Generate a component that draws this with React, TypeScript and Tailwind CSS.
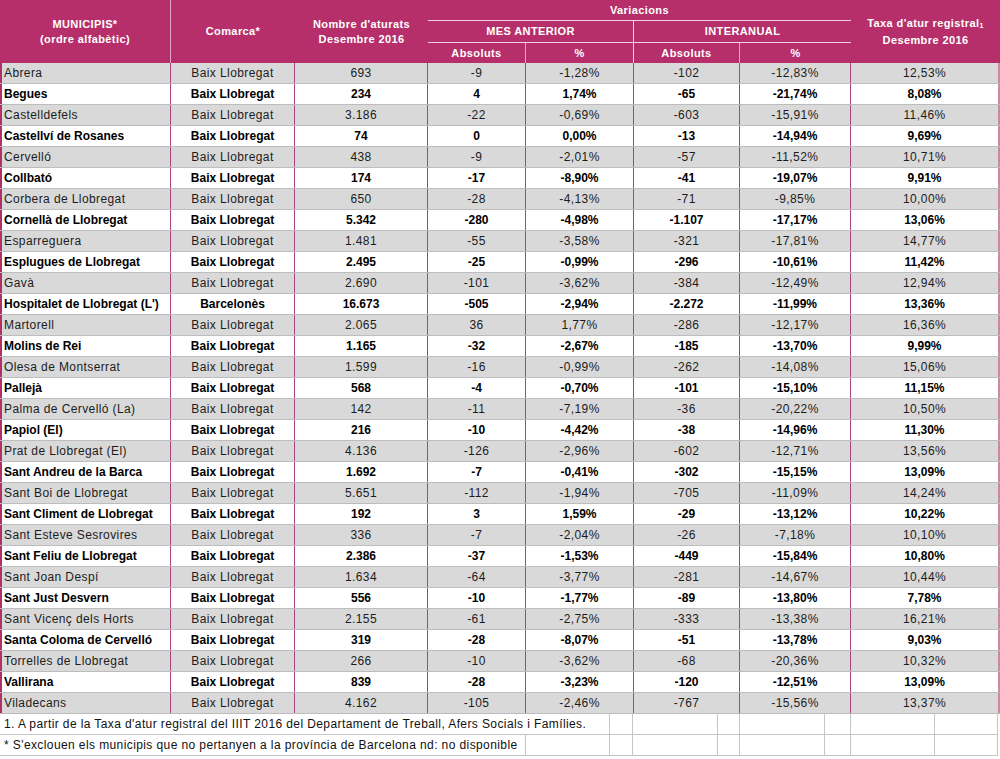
import React from "react";

const rows: string[][] = [
  ["Abrera", "Baix Llobregat", "693", "-9", "-1,28%", "-102", "-12,83%", "12,53%"],
  ["Begues", "Baix Llobregat", "234", "4", "1,74%", "-65", "-21,74%", "8,08%"],
  ["Castelldefels", "Baix Llobregat", "3.186", "-22", "-0,69%", "-603", "-15,91%", "11,46%"],
  ["Castellví de Rosanes", "Baix Llobregat", "74", "0", "0,00%", "-13", "-14,94%", "9,69%"],
  ["Cervelló", "Baix Llobregat", "438", "-9", "-2,01%", "-57", "-11,52%", "10,71%"],
  ["Collbató", "Baix Llobregat", "174", "-17", "-8,90%", "-41", "-19,07%", "9,91%"],
  ["Corbera de Llobregat", "Baix Llobregat", "650", "-28", "-4,13%", "-71", "-9,85%", "10,00%"],
  ["Cornellà de Llobregat", "Baix Llobregat", "5.342", "-280", "-4,98%", "-1.107", "-17,17%", "13,06%"],
  ["Esparreguera", "Baix Llobregat", "1.481", "-55", "-3,58%", "-321", "-17,81%", "14,77%"],
  ["Esplugues de Llobregat", "Baix Llobregat", "2.495", "-25", "-0,99%", "-296", "-10,61%", "11,42%"],
  ["Gavà", "Baix Llobregat", "2.690", "-101", "-3,62%", "-384", "-12,49%", "12,94%"],
  ["Hospitalet de Llobregat (L')", "Barcelonès", "16.673", "-505", "-2,94%", "-2.272", "-11,99%", "13,36%"],
  ["Martorell", "Baix Llobregat", "2.065", "36", "1,77%", "-286", "-12,17%", "16,36%"],
  ["Molins de Rei", "Baix Llobregat", "1.165", "-32", "-2,67%", "-185", "-13,70%", "9,99%"],
  ["Olesa de Montserrat", "Baix Llobregat", "1.599", "-16", "-0,99%", "-262", "-14,08%", "15,06%"],
  ["Pallejà", "Baix Llobregat", "568", "-4", "-0,70%", "-101", "-15,10%", "11,15%"],
  ["Palma de Cervelló (La)", "Baix Llobregat", "142", "-11", "-7,19%", "-36", "-20,22%", "10,50%"],
  ["Papiol (El)", "Baix Llobregat", "216", "-10", "-4,42%", "-38", "-14,96%", "11,30%"],
  ["Prat de Llobregat (El)", "Baix Llobregat", "4.136", "-126", "-2,96%", "-602", "-12,71%", "13,56%"],
  ["Sant Andreu de la Barca", "Baix Llobregat", "1.692", "-7", "-0,41%", "-302", "-15,15%", "13,09%"],
  ["Sant Boi de Llobregat", "Baix Llobregat", "5.651", "-112", "-1,94%", "-705", "-11,09%", "14,24%"],
  ["Sant Climent de Llobregat", "Baix Llobregat", "192", "3", "1,59%", "-29", "-13,12%", "10,22%"],
  ["Sant Esteve Sesrovires", "Baix Llobregat", "336", "-7", "-2,04%", "-26", "-7,18%", "10,10%"],
  ["Sant Feliu de Llobregat", "Baix Llobregat", "2.386", "-37", "-1,53%", "-449", "-15,84%", "10,80%"],
  ["Sant Joan Despí", "Baix Llobregat", "1.634", "-64", "-3,77%", "-281", "-14,67%", "10,44%"],
  ["Sant Just Desvern", "Baix Llobregat", "556", "-10", "-1,77%", "-89", "-13,80%", "7,78%"],
  ["Sant Vicenç dels Horts", "Baix Llobregat", "2.155", "-61", "-2,75%", "-333", "-13,38%", "16,21%"],
  ["Santa Coloma de Cervelló", "Baix Llobregat", "319", "-28", "-8,07%", "-51", "-13,78%", "9,03%"],
  ["Torrelles de Llobregat", "Baix Llobregat", "266", "-10", "-3,62%", "-68", "-20,36%", "10,32%"],
  ["Vallirana", "Baix Llobregat", "839", "-28", "-3,23%", "-120", "-12,51%", "13,09%"],
  ["Viladecans", "Baix Llobregat", "4.162", "-105", "-2,46%", "-767", "-15,56%", "13,37%"],
];

const widths = ["w-[171px]", "w-[124px]", "w-[133px]", "w-[98px]", "w-[108px]", "w-[106px]", "w-[111px]", "w-[149px]"];

function Header() {
  return (
    <div className="grid grid-cols-[171px_124px_133px_98px_108px_106px_111px_149px] grid-rows-[21px_22px_20px] h-[63px] bg-[#b62f6a] text-white font-bold text-[11px] tracking-[0.4px] leading-[15px]">
      <div className="row-span-3 flex flex-col items-center justify-center text-center border-r border-[#e7a8c4]">
        <span>MUNICIPIS*</span>
        <span>(ordre alfabètic)</span>
      </div>
      <div className="row-span-3 flex items-center justify-center">Comarca*</div>
      <div className="row-span-3 flex flex-col items-center justify-center text-center">
        <span>Nombre d'aturats</span>
        <span>Desembre 2016</span>
      </div>
      <div className="col-span-4 flex items-center justify-center border-b border-[#f3d3e1]">Variacions</div>
      <div className="row-span-3 flex flex-col items-center justify-center text-center">
        <span>
          Taxa d'atur registral<span className="text-[7px] align-[-1px]">1</span>
        </span>
        <span>Desembre 2016</span>
      </div>
      <div className="col-span-2 flex items-center justify-center border-b border-r border-[#f3d3e1]">MES ANTERIOR</div>
      <div className="col-span-2 flex items-center justify-center border-b border-[#f3d3e1]">INTERANUAL</div>
      <div className="flex items-center justify-center border-r border-[#e7a8c4]">Absoluts</div>
      <div className="flex items-center justify-center border-r border-[#f3d3e1]">%</div>
      <div className="flex items-center justify-center border-r border-[#e7a8c4]">Absoluts</div>
      <div className="flex items-center justify-center">%</div>
    </div>
  );
}

function DataRow({ r, i }: { r: string[]; i: number }) {
  const odd = i % 2 === 0;
  return (
    <div
      className={`flex h-[21px] border-b border-[#bdbdbd] ${
        odd ? "bg-[#d9d9d9] text-[#1c1c1c] font-normal tracking-[0.4px]" : "bg-white text-black font-bold"
      }`}
    >
      {r.map((c, j) => (
        <div
          key={j}
          className={`${widths[j]} h-full flex items-center border-r border-[#a9457a] ${
            j === 0 ? "justify-start pl-[2px] border-l-2 border-l-[#b03068] whitespace-nowrap" : "justify-center"
          } ${j === 7 ? "border-r-2 border-r-[#c78aa6]" : ""}`}
        >
          {c}
        </div>
      ))}
    </div>
  );
}

function FooterCell({ w, children }: { w: string; children?: React.ReactNode }) {
  return (
    <div className={`${w} h-full flex items-center border-r border-b border-[#c6c6c6] whitespace-nowrap pl-[4px]`}>
      {children}
    </div>
  );
}

export default function App() {
  return (
    <div className="w-[1000px] h-[759px] bg-white font-['Liberation_Sans',Arial,sans-serif] text-[12px] overflow-hidden">
      <Header />
      {rows.map((r, i) => (
        <DataRow key={i} r={r} i={i} />
      ))}
      <div className="flex h-[21px] text-[#111] tracking-[0.4px]">
        <FooterCell w="w-[610px]">
          1. A partir de la Taxa d'atur registral del IIIT 2016 del Departament de Treball, Afers Socials i Famílies.
        </FooterCell>
        <FooterCell w="w-[23px]" />
        <FooterCell w="w-[85px]" />
        <FooterCell w="w-[22px]" />
        <FooterCell w="w-[85px]" />
        <FooterCell w="w-[26px]" />
        <FooterCell w="w-[84px]" />
        <FooterCell w="w-[63px]" />
      </div>
      <div className="flex h-[21px] text-[#111] tracking-[0.4px]">
        <FooterCell w="w-[526px]">
          * S'exclouen els municipis que no pertanyen a la província de Barcelona nd: no disponible
        </FooterCell>
        <FooterCell w="w-[84px]" />
        <FooterCell w="w-[23px]" />
        <FooterCell w="w-[85px]" />
        <FooterCell w="w-[22px]" />
        <FooterCell w="w-[85px]" />
        <FooterCell w="w-[26px]" />
        <FooterCell w="w-[84px]" />
        <FooterCell w="w-[63px]" />
      </div>
    </div>
  );
}
